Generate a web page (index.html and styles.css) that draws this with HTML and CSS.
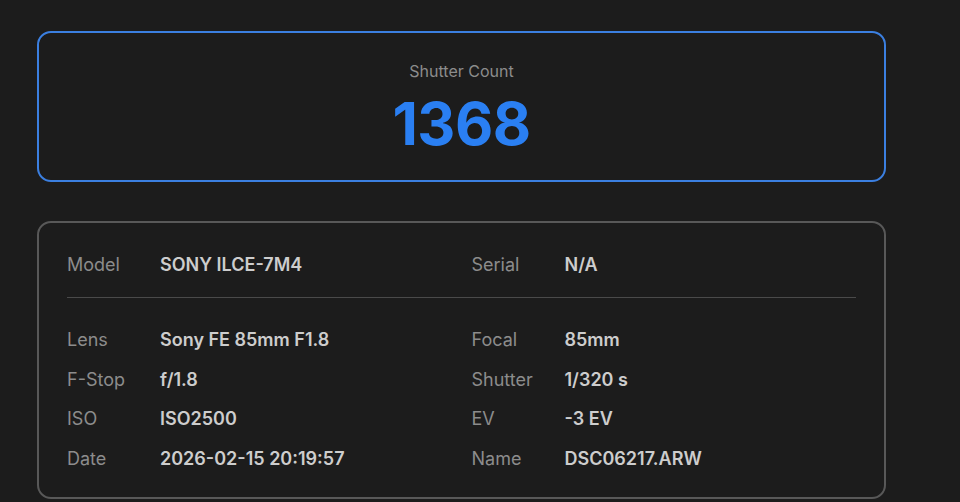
FILE: index.html
```html
<!DOCTYPE html>
<html lang="en">
<head>
  <meta charset="UTF-8" />
  <meta name="viewport" content="width=device-width, initial-scale=1" />
  <title>Shutter Count</title>
  <link rel="stylesheet" href="styles.css">
</head>
<body>
  <main class="contenedor">
    <!-- Contador principal -->
    <section class="tarjeta-contador">
      <div class="etiqueta-contador">Shutter Count</div>
      <div class="numero-contador">1368</div>
    </section>

    <!-- Datos EXIF -->
    <section class="tarjeta-datos">
      <div class="rejilla">
        <div class="fila"><span class="clave">Model</span><span class="valor">SONY ILCE-7M4</span></div>
        <div class="fila"><span class="clave">Serial</span><span class="valor">N/A</span></div>
      </div>

      <hr class="separador">

      <div class="rejilla">
        <div class="fila"><span class="clave">Lens</span><span class="valor">Sony FE 85mm F1.8</span></div>
        <div class="fila"><span class="clave">Focal</span><span class="valor">85mm</span></div>
        <div class="fila"><span class="clave">F-Stop</span><span class="valor">f/1.8</span></div>
        <div class="fila"><span class="clave">Shutter</span><span class="valor">1/320 s</span></div>
        <div class="fila"><span class="clave">ISO</span><span class="valor">ISO2500</span></div>
        <div class="fila"><span class="clave">EV</span><span class="valor">-3 EV</span></div>
        <div class="fila"><span class="clave">Date</span><span class="valor">2026-02-15 20:19:57</span></div>
        <div class="fila"><span class="clave">Name</span><span class="valor">DSC06217.ARW</span></div>
      </div>
    </section>
  </main>
</body>
</html>
```

FILE: styles.css
```css
:root {
  --fondo: #1c1c1c;
  --azul: #2a7ff2;
  --borde-azul: #3b7fe0;
  --borde-gris: #585858;
  --texto-suave: #8c8c8c;
  --texto-valor: #cdcdcd;
}

* {
  margin: 0;
  padding: 0;
  box-sizing: border-box;
}

body {
  background: var(--fondo);
  font-family: 'Inter', 'Roboto', sans-serif;
  overflow: hidden;
  min-height: 100vh;
}

.contenedor {
  width: 849px;
  margin: 31px 0 0 37px;
  display: flex;
  flex-direction: column;
  gap: 39px;
}

/* Contador */
.tarjeta-contador {
  border: 2px solid var(--borde-azul);
  border-radius: 14px;
  padding: 28px 0 20px;
  text-align: center;
  height: 151px;
}

.etiqueta-contador {
  font-size: 16px;
  line-height: 21px;
  color: var(--texto-suave);
}

.numero-contador {
  font-size: 59px;
  line-height: 72px;
  font-weight: 700;
  color: var(--azul);
  margin-top: 6px;
  letter-spacing: -0.5px;
}

/* Datos */
.tarjeta-datos {
  border: 2px solid var(--borde-gris);
  border-radius: 14px;
  padding: 22px 28px 19px;
}

.rejilla {
  display: grid;
  grid-template-columns: 1fr 1fr;
  column-gap: 20px;
}

.fila {
  display: flex;
  height: 39.7px;
  align-items: center;
  font-size: 18px;
}

.clave {
  width: 93px;
  color: var(--texto-suave);
}

.valor {
  color: var(--texto-valor);
  font-weight: 600;
}

.separador {
  border: none;
  border-top: 1px solid #4a4a4a;
  margin: 12px 0 22px;
}
```
